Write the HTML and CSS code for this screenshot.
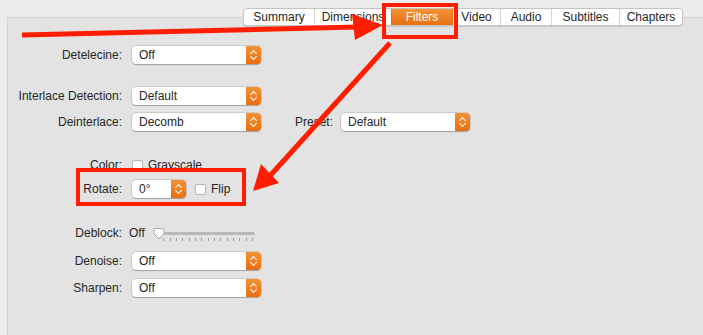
FILE: index.html
```html
<!DOCTYPE html>
<html lang="en">
<head>
    <meta charset="UTF-8">
    <meta name="viewport" content="width=device-width, initial-scale=1.0">
    <title>Filters</title>
    <link rel="stylesheet" href="styles.css">
</head>
<body>
    <div class="panel">
        <div class="tabs">
            <div class="tab t-summary">Summary</div>
            <div class="tab t-dim">Dimensions</div>
            <div class="tab t-filters active">Filters</div>
            <div class="tab t-video">Video</div>
            <div class="tab t-audio">Audio</div>
            <div class="tab t-subs">Subtitles</div>
            <div class="tab t-chap">Chapters</div>
        </div>

        <div class="row r-detel">
            <label>Detelecine:</label>
            <div class="popup">Off<span class="arrows"></span></div>
        </div>
        <div class="row r-ildet">
            <label>Interlace Detection:</label>
            <div class="popup">Default<span class="arrows"></span></div>
        </div>
        <div class="row r-deint">
            <label>Deinterlace:</label>
            <div class="popup">Decomb<span class="arrows"></span></div>
            <span class="inline-label">Preset:</span>
            <div class="popup">Default<span class="arrows"></span></div>
        </div>
        <div class="row r-color">
            <label>Color:</label>
            <span class="check"></span><span>Grayscale</span>
        </div>
        <div class="row r-rotate">
            <label>Rotate:</label>
            <div class="popup small">0°<span class="arrows"></span></div>
            <span class="check flip"></span><span>Flip</span>
        </div>
        <div class="row r-deblock">
            <label>Deblock:</label>
            <span class="off">Off</span>
            <svg class="slider" width="104" height="16" viewBox="0 0 104 16">
                <rect x="3" y="5" width="100" height="3" rx="1.5" fill="#b9b9b9"/>
                <g stroke="#9a9a9a" stroke-width="1">
                    <line x1="11.5" y1="11" x2="11.5" y2="14"/>
                    <line x1="18.5" y1="11" x2="18.5" y2="14"/>
                    <line x1="24.5" y1="11" x2="24.5" y2="14"/>
                    <line x1="30.5" y1="11" x2="30.5" y2="14"/>
                    <line x1="37.5" y1="11" x2="37.5" y2="14"/>
                    <line x1="43.5" y1="11" x2="43.5" y2="14"/>
                    <line x1="49.5" y1="11" x2="49.5" y2="14"/>
                    <line x1="56.5" y1="11" x2="56.5" y2="14"/>
                    <line x1="62.5" y1="11" x2="62.5" y2="14"/>
                    <line x1="68.5" y1="11" x2="68.5" y2="14"/>
                    <line x1="75.5" y1="11" x2="75.5" y2="14"/>
                    <line x1="81.5" y1="11" x2="81.5" y2="14"/>
                    <line x1="87.5" y1="11" x2="87.5" y2="14"/>
                    <line x1="94.5" y1="11" x2="94.5" y2="14"/>
                    <line x1="100.5" y1="11" x2="100.5" y2="14"/>
                </g>
                <path d="M2 1.5 H11 Q12 1.5 12 2.5 V7 L7 12 L2 7 V2.5 Q2 1.5 3 1.5 Z" fill="#fff" stroke="#a8a8a8" stroke-width="1"/>
            </svg>
        </div>
        <div class="row r-denoise">
            <label>Denoise:</label>
            <div class="popup">Off<span class="arrows"></span></div>
        </div>
        <div class="row r-sharpen">
            <label>Sharpen:</label>
            <div class="popup">Off<span class="arrows"></span></div>
        </div>
    </div>

    <svg class="marks" width="703" height="335" viewBox="0 0 703 335">
        <g fill="none" stroke="#ff1e00">
            <line x1="22" y1="35" x2="358" y2="27" stroke-width="5"/>
            <rect x="384" y="5" width="72" height="32" stroke-width="4"/>
            <line x1="390" y1="43" x2="268" y2="178" stroke-width="5"/>
            <rect x="78" y="170" width="166" height="34" stroke-width="4"/>
        </g>
        <g fill="#ff1e00">
            <polygon points="352,14 383,25 355,40"/>
            <polygon points="261,164 279,183 253,191"/>
        </g>
    </svg>
</body>
</html>
```

FILE: styles.css
```css
body { margin: 0; background: #ececec; font-family: "Liberation Sans", Arial, sans-serif; font-size: 12px; color: #262626; }
.panel { margin: 17px 0 0 7px; height: 330px; background: #e3e3e3; border-top: 1px solid #d2d2d2; border-left: 1px solid #d2d2d2; }
.tabs { display: flex; margin: -10px 0 0 235px; width: 440px; height: 18px; box-sizing: border-box; background: #fff; border: 1px solid #c4c4c4; border-radius: 4px; box-shadow: 0 1px 1px rgba(0,0,0,0.12); overflow: hidden; }
.tab { display: flex; align-items: center; justify-content: center; border-left: 1px solid #d6d6d6; line-height: 16px; }
.tab:first-child { border-left: none; }
.t-summary { width: 70px; }
.t-dim { width: 76px; }
.t-filters { width: 60px; }
.t-video { width: 47px; }
.t-audio { width: 50px; }
.t-subs { width: 67px; }
.t-chap { flex: 1; }
.tab.active { background: linear-gradient(#f59337, #e8700f); color: #fff; border-left-color: #e8700f; }
.tab.active + .tab { border-left-color: #e8700f; }

.row { display: flex; align-items: center; height: 18px; }
.row label { width: 114px; margin-right: 10px; text-align: right; }
.r-detel { margin-top: 20px; }
.r-ildet { margin-top: 23px; }
.r-deint { margin-top: 8px; }
.r-color { margin-top: 25px; }
.r-rotate { margin-top: 6px; }
.r-deblock { margin-top: 26px; }
.r-denoise { margin-top: 10px; }
.r-sharpen { margin-top: 9px; }

.popup { position: relative; width: 129px; height: 18px; box-sizing: border-box; padding-left: 7px; line-height: 18px; background: #fff; border-radius: 4px; box-shadow: 0 0 0 0.5px rgba(0,0,0,0.22), 0 1px 1px rgba(0,0,0,0.2); }
.popup.small { width: 54px; }
.arrows { position: absolute; right: 0; top: 0; width: 15px; height: 18px; border-radius: 0 4px 4px 0; background: linear-gradient(#f39135, #e96f10); }
.arrows::before, .arrows::after { content: ""; position: absolute; left: 5px; width: 4px; height: 4px; border: solid #fff; border-width: 1.5px 0 0 1.5px; }
.arrows::before { top: 5px; transform: rotate(45deg); }
.arrows::after { top: 8px; transform: rotate(225deg); }
.inline-label { margin-left: 34px; margin-right: 8px; }

.check { width: 11px; height: 11px; box-sizing: border-box; background: #fff; border: 1px solid #b4b4b4; border-radius: 2px; margin-right: 5px; }
.check.flip { margin-left: 9px; }
.off { margin-left: -3px; margin-right: 7px; }
.slider { margin-top: 3px; }

.marks { position: absolute; left: 0; top: 0; pointer-events: none; }
```
